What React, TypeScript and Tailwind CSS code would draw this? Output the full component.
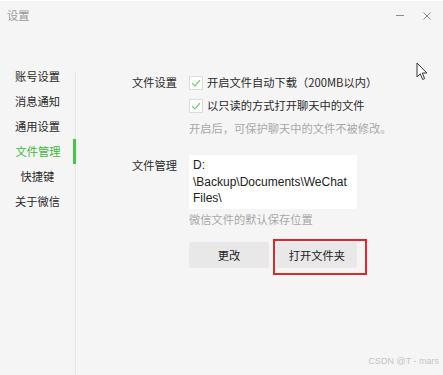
import React from "react";

const menu = ["账号设置", "消息通知", "通用设置", "文件管理", "快捷键", "关于微信"];

function Check() {
  return (
    <span className="flex h-[14px] w-[14px] shrink-0 items-center justify-center border border-[#dcdcdc] bg-white">
      <svg width="10" height="8" viewBox="0 0 10 8" fill="none">
        <path d="M1 4.2 L3.8 7 L9 1.2" stroke="#6acb6a" strokeWidth="1.2" />
      </svg>
    </span>
  );
}

export default function App() {
  return (
    <div
      className="relative h-[375px] w-[443px] overflow-hidden border-t border-white bg-[#f5f5f5] text-[11.25px] text-[#2a2a2a]"
      style={{ fontFamily: '"Noto Sans CJK SC", "Liberation Sans", sans-serif' }}
    >
      {/* title bar */}
      <div className="flex h-[29px] items-center justify-between pl-[7px] pr-[12px]">
        <span className="text-[#999999]">设置</span>
        <div className="flex items-center gap-[19px]">
          <span className="h-px w-[8px] bg-[#8a8a8a]" />
          <svg width="8" height="8" viewBox="0 0 8 8">
            <path d="M0.5 0.5 L7.5 7.5 M7.5 0.5 L0.5 7.5" stroke="#8a8a8a" strokeWidth="1" />
          </svg>
        </div>
      </div>

      <div className="mt-[34px] flex h-[311px]">
        {/* sidebar */}
        <div className="mt-[8px] w-[76px] shrink-0 border-r border-[#e6e6e6]">
          <div className="-mt-[8px]">
            {menu.map((m) => (
              <div
                key={m}
                className={
                  m === "文件管理"
                    ? "relative -mr-px flex h-[25px] items-center justify-center border-r-[3px] border-[#45c845] text-[#3dba3d]"
                    : "flex h-[25px] items-center justify-center"
                }
              >
                <span className={m === "文件管理" ? "ml-[3px]" : ""}>{m}</span>
              </div>
            ))}
          </div>
        </div>

        {/* content */}
        <div className="flex flex-col pl-[56px] pt-[7px]">
          <div className="flex">
            <div className="w-[57px] shrink-0 leading-[23px]">文件设置</div>
            <div className="flex flex-col">
              <div className="flex h-[23px] items-center gap-[4px]">
                <Check />
                <span>开启文件自动下载（200MB以内）</span>
              </div>
              <div className="flex h-[23px] items-center gap-[4px]">
                <Check />
                <span>以只读的方式打开聊天中的文件</span>
              </div>
              <div className="flex h-[22px] items-center text-[#a8a8a8]">
                开启后，可保护聊天中的文件不被修改。
              </div>
            </div>
          </div>

          <div className="mt-[16px] flex">
            <div className="w-[57px] shrink-0 pt-[2px] leading-[16.5px]">文件管理</div>
            <div className="flex flex-col">
              <div
                className="h-[54px] w-[168px] bg-white pl-[4px] pt-[2px] text-[12px] leading-[16.5px] text-[#222]"
                style={{ fontFamily: '"Liberation Sans", sans-serif' }}
              >
                D:
                <br />
                \Backup\Documents\WeChat
                <br />
                Files\
              </div>
              <div className="flex h-[20px] items-center text-[#a8a8a8]">微信文件的默认保存位置</div>
              <div className="mt-[13px] flex gap-[8px]">
                <button className="h-[26px] w-[80px] rounded-[2px] bg-[#e8e8e8] text-[#222]">更改</button>
                <div className="relative">
                  <button className="h-[26px] w-[80px] rounded-[2px] bg-[#e8e8e8] text-[#222]">打开文件夹</button>
                  <span className="pointer-events-none absolute -bottom-[7px] -left-[4px] -right-[10px] -top-[3px] border-2 border-[#e3262e]" />
                </div>
              </div>
            </div>
          </div>
        </div>
      </div>

      {/* mouse cursor */}
      <svg className="absolute left-[416px] top-[61px]" width="12" height="19" viewBox="0 0 12 19">
        <path
          d="M1 1 L1 15 L4.3 11.8 L6.6 17.4 L8.6 16.6 L6.3 11 L10.8 11 Z"
          fill="#ffffff"
          stroke="#333333"
          strokeWidth="1"
          strokeLinejoin="round"
        />
      </svg>

      <span
        className="absolute bottom-[7px] right-[4px] text-[9px] text-[#c4c4c4]"
        style={{ fontFamily: '"Liberation Sans", sans-serif' }}
      >
        CSDN @T - mars
      </span>
    </div>
  );
}
